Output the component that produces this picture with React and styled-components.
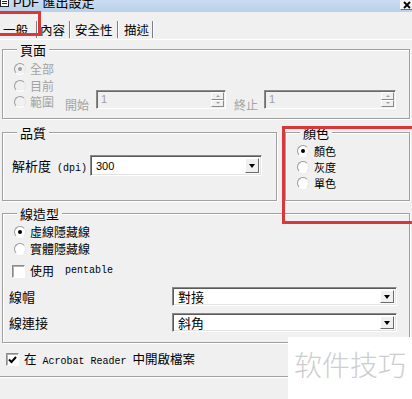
import React from 'react';
import styled, { createGlobalStyle } from 'styled-components';

const Global = createGlobalStyle`
  html, body {
    margin: 0;
    padding: 0;
    background: #f0f0f0;
  }
  body {
    font-family: "Noto Sans CJK TC", "Noto Sans", sans-serif;
  }
`;

export default function App() {
  return (
    <Window>
      <Global />
      <TitleBar>
        <TitleIcon viewBox="0 0 9 9">
          <rect x="0.5" y="0.5" width="8" height="8" fill="#fff" stroke="#222" />
          <rect x="2" y="3" width="5" height="1" fill="#222" />
          <rect x="2" y="5" width="5" height="1" fill="#222" />
        </TitleIcon>
        <TitleText>PDF 匯出設定</TitleText>
        <CloseButton>
          <svg width="8" height="8" viewBox="0 0 8 8">
            <path d="M1 1 L7 7 M7 1 L1 7" stroke="#000" strokeWidth="1.8" />
          </svg>
        </CloseButton>
      </TitleBar>

      <TabStrip>
        <Tab $w={37} $pl={3}>一般</Tab>
        <Tab $w={33} $pl={3}>內容</Tab>
        <Tab $w={48} $pl={5}>安全性</Tab>
        <Tab $w={35} $pl={6}>描述</Tab>
      </TabStrip>

      <Panel>
        <Group $mt={9} $h={70}>
          <Legend>頁面</Legend>
          <PageBody>
            <RadioColumn>
              <RadioRow $disabled>
                <Radio $checked $disabled />全部
              </RadioRow>
              <RadioRow $disabled>
                <Radio $disabled />目前
              </RadioRow>
              <RadioRow $disabled>
                <Radio $disabled />範圍
              </RadioRow>
            </RadioColumn>
            <RangeRow>
              <RangeLabel $ml={11}>開始</RangeLabel>
              <Spin $ml={7} $w={130}>
                <SpinValue>1</SpinValue>
                <SpinButtons>
                  <SpinButton><Arrow $up /></SpinButton>
                  <SpinButton><Arrow /></SpinButton>
                </SpinButtons>
              </Spin>
              <RangeLabel $ml={8}>終止</RangeLabel>
              <Spin $ml={6} $w={132}>
                <SpinValue>1</SpinValue>
                <SpinButtons>
                  <SpinButton><Arrow $up /></SpinButton>
                  <SpinButton><Arrow /></SpinButton>
                </SpinButtons>
              </Spin>
            </RangeRow>
          </PageBody>
        </Group>

        <QualityRow>
          <Group $w={275} $h={69}>
            <Legend>品質</Legend>
            <DpiRow>
              <DpiLabel>
                解析度<Mono> (dpi)</Mono>
              </DpiLabel>
              <Combo $w={172} $h={21}>
                <ComboValue>300</ComboValue>
                <DropButton>
                  <Arrow $dark />
                </DropButton>
              </Combo>
            </DpiRow>
          </Group>
          <ColorGroup $h={69}>
            <Legend>顏色</Legend>
            <ColorList>
              <SmallRadioRow>
                <Radio $checked />顏色
              </SmallRadioRow>
              <SmallRadioRow>
                <Radio />灰度
              </SmallRadioRow>
              <SmallRadioRow>
                <Radio />單色
              </SmallRadioRow>
            </ColorList>
          </ColorGroup>
        </QualityRow>

        <Group $mt={12} $h={130}>
          <Legend>線造型</Legend>
          <LineBody>
            <RadioRow $indent={5}>
              <Radio $checked />虛線隱藏線
            </RadioRow>
            <RadioRow $indent={5}>
              <Radio />實體隱藏線
            </RadioRow>
            <CheckRow $indent={3} $mt={6}>
              <CheckBox />
              使用<Mono> pentable</Mono>
            </CheckRow>
            <FieldRow $mt={8}>
              <FieldLabel>線帽</FieldLabel>
              <Combo $w={225} $h={19}>
                <ComboValue $cjk>對接</ComboValue>
                <DropButton>
                  <Arrow $dark />
                </DropButton>
              </Combo>
            </FieldRow>
            <FieldRow $mt={7}>
              <FieldLabel>線連接</FieldLabel>
              <Combo $w={225} $h={19}>
                <ComboValue $cjk>斜角</ComboValue>
                <DropButton>
                  <Arrow $dark />
                </DropButton>
              </Combo>
            </FieldRow>
          </LineBody>
        </Group>
      </Panel>

      <BottomRow>
        <CheckBox $checked>
          <svg width="9" height="8" viewBox="0 0 9 8">
            <path d="M1 3.5 L3.5 6 L8 1" stroke="#000" strokeWidth="2" fill="none" />
          </svg>
        </CheckBox>
        <BottomText>
          在<Mono> Acrobat Reader </Mono>中開啟檔案
        </BottomText>
      </BottomRow>
      <Separator />

      <Highlight $l={-3} $t={11} $w={44} $h={25} />
      <Highlight $l={282} $t={126} $w={133} $h={98} />

      <Watermark>软件技巧</Watermark>
    </Window>
  );
}

const Window = styled.div`
  position: relative;
  width: 412px;
  height: 399px;
  overflow: hidden;
  background: #f0f0f0;
  color: #000;
  font-size: 12px;
`;

const TitleBar = styled.div`
  position: relative;
  height: 12px;
  display: flex;
  align-items: flex-start;
  overflow: hidden;
  background: linear-gradient(#cadcef, #b9d1ea);
`;

const TitleIcon = styled.svg`
  width: 9px;
  height: 9px;
  margin-top: -2px;
  flex: none;
`;

const TitleText = styled.div`
  margin: -4px 0 0 4px;
  font-family: "Liberation Sans", "Noto Sans CJK TC", sans-serif;
  font-size: 13px;
  line-height: 14px;
  white-space: nowrap;
`;

const CloseButton = styled.div`
  margin-left: auto;
  width: 12px;
  height: 10px;
  display: flex;
  align-items: center;
  justify-content: center;
  background: #f4f4f4;
  border-left: 1px solid #fff;
  border-bottom: 1px solid #6d6d6d;
  box-sizing: border-box;
`;

const TabStrip = styled.div`
  height: 27px;
  display: flex;
  align-items: flex-end;
  border-bottom: 1px solid #fff;
`;

const Tab = styled.div`
  width: ${({ $w }) => $w}px;
  height: 17px;
  margin-bottom: 1px;
  padding-left: ${({ $pl }) => $pl}px;
  box-sizing: border-box;
  display: flex;
  align-items: center;
  font-size: 12.5px;
  white-space: nowrap;
  border-right: 1px solid #7d7d7d;
  box-shadow: 1px 0 0 #fff;
`;

const Panel = styled.div`
  display: flex;
  flex-direction: column;
  padding: 0 2px;
`;

const Group = styled.div`
  position: relative;
  box-sizing: border-box;
  margin-top: ${({ $mt }) => $mt || 0}px;
  width: ${({ $w }) => ($w ? `${$w}px` : 'auto')};
  height: ${({ $h }) => $h}px;
  border: 1px solid #a0a0a0;
  box-shadow: 1px 1px 0 #fff, inset 1px 1px 0 #fff;
`;

const ColorGroup = styled(Group)`
  flex: 1;
  margin-left: 8px;
`;

const Legend = styled.span`
  position: absolute;
  top: -8px;
  left: 14px;
  padding: 0 3px;
  background: #f0f0f0;
  font-size: 13px;
  line-height: 15px;
`;

const PageBody = styled.div`
  display: flex;
  padding-left: 11px;
`;

const RadioColumn = styled.div`
  display: flex;
  flex-direction: column;
  padding-top: 11px;
`;

const RadioRow = styled.div`
  height: 16.5px;
  display: flex;
  align-items: center;
  gap: 4px;
  padding-left: ${({ $indent }) => $indent || 0}px;
  font-size: 12px;
  line-height: 14px;
  color: ${({ $disabled }) => ($disabled ? '#a3a3a3' : '#000')};
  white-space: nowrap;
`;

const SmallRadioRow = styled(RadioRow)`
  height: 16px;
  font-size: 11px;
  line-height: 13px;
  gap: 5px;
`;

const Radio = styled.span`
  position: relative;
  width: 12px;
  height: 12px;
  flex: none;
  box-sizing: border-box;
  border-radius: 50%;
  border: 1px solid;
  border-color: #9a9a9a #e4e4e4 #fff #9a9a9a;
  background: ${({ $disabled }) => ($disabled ? '#f0f0f0' : '#fff')};
  &::after {
    content: '';
    display: ${({ $checked }) => ($checked ? 'block' : 'none')};
    position: absolute;
    left: 3px;
    top: 3px;
    width: 4px;
    height: 4px;
    border-radius: 50%;
    background: ${({ $disabled }) => ($disabled ? '#a0a0a0' : '#000')};
  }
`;

const RangeRow = styled.div`
  display: flex;
  align-items: flex-start;
  margin-top: 40px;
`;

const RangeLabel = styled.span`
  margin: 8px 0 0 ${({ $ml }) => $ml}px;
  font-size: 12px;
  line-height: 14px;
  color: #a3a3a3;
`;

const Spin = styled.div`
  width: ${({ $w }) => $w}px;
  height: 19px;
  margin-left: ${({ $ml }) => $ml}px;
  box-sizing: border-box;
  display: flex;
  border: 1px solid;
  border-color: #8a8a8a #fff #fff #8a8a8a;
  box-shadow: inset 1px 1px 0 #6a6a6a;
  background: #f0f0f0;
`;

const SpinValue = styled.span`
  flex: 1;
  padding: 1px 0 0 4px;
  font-family: "Liberation Sans", sans-serif;
  font-size: 11px;
  line-height: 14px;
  color: #a0a0a0;
`;

const SpinButtons = styled.div`
  width: 13px;
  display: flex;
  flex-direction: column;
  padding: 1px 1px 1px 0;
`;

const SpinButton = styled.div`
  flex: 1;
  display: flex;
  align-items: center;
  justify-content: center;
  box-sizing: border-box;
  border: 1px solid;
  border-color: #fff #8a8a8a #8a8a8a #fff;
  background: #f0f0f0;
`;

const Arrow = styled.span`
  width: 0;
  height: 0;
  border-left: ${({ $dark }) => ($dark ? 3.5 : 2)}px solid transparent;
  border-right: ${({ $dark }) => ($dark ? 3.5 : 2)}px solid transparent;
  ${({ $up, $dark }) =>
    $up
      ? `border-bottom: 2px solid ${$dark ? '#000' : '#a0a0a0'};`
      : `border-top: ${$dark ? 4 : 2}px solid ${$dark ? '#000' : '#a0a0a0'};`}
`;

const QualityRow = styled.div`
  display: flex;
  margin-top: 13px;
`;

const DpiRow = styled.div`
  display: flex;
  align-items: center;
  padding: 22px 0 0 9px;
`;

const DpiLabel = styled.span`
  width: 78px;
  font-size: 13px;
  white-space: nowrap;
`;

const Mono = styled.span`
  font-family: "Liberation Mono", monospace;
  font-size: 10px;
  white-space: pre;
`;

const Combo = styled.div`
  width: ${({ $w }) => $w}px;
  height: ${({ $h }) => $h}px;
  box-sizing: border-box;
  display: flex;
  align-items: center;
  border: 1px solid;
  border-color: #8a8a8a #fff #fff #8a8a8a;
  box-shadow: inset 1px 1px 0 #5a5a5a, inset -1px -1px 0 #e3e3e3;
  background: #fff;
  padding: 2px;
`;

const ComboValue = styled.span`
  flex: 1;
  padding-left: 3px;
  font-family: ${({ $cjk }) => ($cjk ? '"Noto Sans CJK TC", sans-serif' : '"Liberation Sans", sans-serif')};
  font-size: ${({ $cjk }) => ($cjk ? 13 : 11)}px;
  line-height: 14px;
`;

const DropButton = styled.div`
  width: 14px;
  height: 100%;
  box-sizing: border-box;
  display: flex;
  align-items: center;
  justify-content: center;
  border: 1px solid;
  border-color: #fff #6a6a6a #6a6a6a #fff;
  background: #f0f0f0;
`;

const ColorList = styled.div`
  display: flex;
  flex-direction: column;
  padding: 10px 0 0 11px;
`;

const LineBody = styled.div`
  display: flex;
  flex-direction: column;
  padding: 10px 0 0 6px;
`;

const CheckRow = styled.div`
  height: 16px;
  display: flex;
  align-items: center;
  gap: 5px;
  margin-top: ${({ $mt }) => $mt}px;
  padding-left: ${({ $indent }) => $indent}px;
  font-size: 12px;
  line-height: 14px;
`;

const CheckBox = styled.span`
  width: 13px;
  height: 13px;
  flex: none;
  box-sizing: border-box;
  display: flex;
  align-items: center;
  justify-content: center;
  border: 1px solid;
  border-color: #8a8a8a #fff #fff #8a8a8a;
  box-shadow: inset 1px 1px 0 #b0b0b0;
  background: #fff;
`;

const FieldRow = styled.div`
  display: flex;
  align-items: center;
  margin-top: ${({ $mt }) => $mt}px;
`;

const FieldLabel = styled.span`
  width: 163px;
  font-size: 13px;
  line-height: 15px;
`;

const BottomRow = styled.div`
  height: 33px;
  display: flex;
  align-items: center;
  gap: 5px;
  padding-left: 6px;
`;

const BottomText = styled.span`
  font-size: 12.5px;
  line-height: 15px;
  white-space: nowrap;
`;

const Separator = styled.div`
  height: 1px;
  background: #a0a0a0;
  border-bottom: 1px solid #fff;
`;

const Highlight = styled.div`
  position: absolute;
  left: ${({ $l }) => $l}px;
  top: ${({ $t }) => $t}px;
  width: ${({ $w }) => $w}px;
  height: ${({ $h }) => $h}px;
  box-sizing: border-box;
  border: 3px solid #d8383c;
  pointer-events: none;
`;

const Watermark = styled.div`
  position: absolute;
  left: 288px;
  top: 337px;
  width: 124px;
  height: 62px;
  box-sizing: border-box;
  padding: 10px 0 0 6px;
  background: #fff;
  font-family: "Noto Sans CJK SC", sans-serif;
  font-weight: 300;
  font-size: 28px;
  line-height: 34px;
  color: #cdcdcd;
  white-space: nowrap;
`;
